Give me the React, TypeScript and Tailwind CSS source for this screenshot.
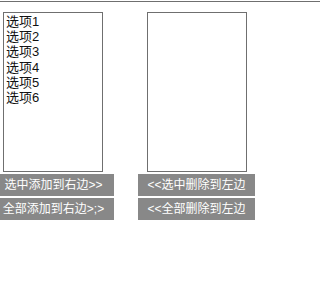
const options = ["选项1", "选项2", "选项3", "选项4", "选项5", "选项6"];

export default function App() {
  return (
    <div className="min-h-screen bg-white font-['Liberation_Sans','Noto_Sans_CJK_SC',sans-serif]">
      {/* top rule */}
      <div className="pt-px">
        <div className="h-px bg-[#6f6f6f]" />
      </div>

      <div className="flex gap-6 pt-[10px]">
        {/* left column */}
        <div className="flex w-[114px] flex-col">
          <div className="ml-[3px] h-[160px] w-[100px] border border-[#6f6f6f] px-[2px] pt-px">
            {options.map((o) => (
              <div key={o} className="text-[13px] leading-[15.2px] text-[#111111]">
                {o}
              </div>
            ))}
          </div>
          <div className="mt-[2px] flex flex-col gap-[2px]">
            <button className="h-[22px] w-[114px] bg-[#888888] pr-[7px] text-center text-[12px] whitespace-nowrap text-white">
              选中添加到右边&gt;&gt;
            </button>
            <button className="h-[22px] w-[114px] bg-[#888888] pr-[7px] text-center text-[12px] whitespace-nowrap text-white">
              全部添加到右边&gt;;&gt;
            </button>
          </div>
        </div>

        {/* right column */}
        <div className="flex w-[117px] flex-col">
          <div className="ml-[9px] h-[160px] w-[100px] border border-[#6f6f6f]" />
          <div className="mt-[2px] flex flex-col gap-[2px]">
            <button className="h-[22px] w-[117px] bg-[#888888] text-center text-[12px] whitespace-nowrap text-white">
              &lt;&lt;选中删除到左边
            </button>
            <button className="h-[22px] w-[117px] bg-[#888888] text-center text-[12px] whitespace-nowrap text-white">
              &lt;&lt;全部删除到左边
            </button>
          </div>
        </div>
      </div>
    </div>
  );
}
